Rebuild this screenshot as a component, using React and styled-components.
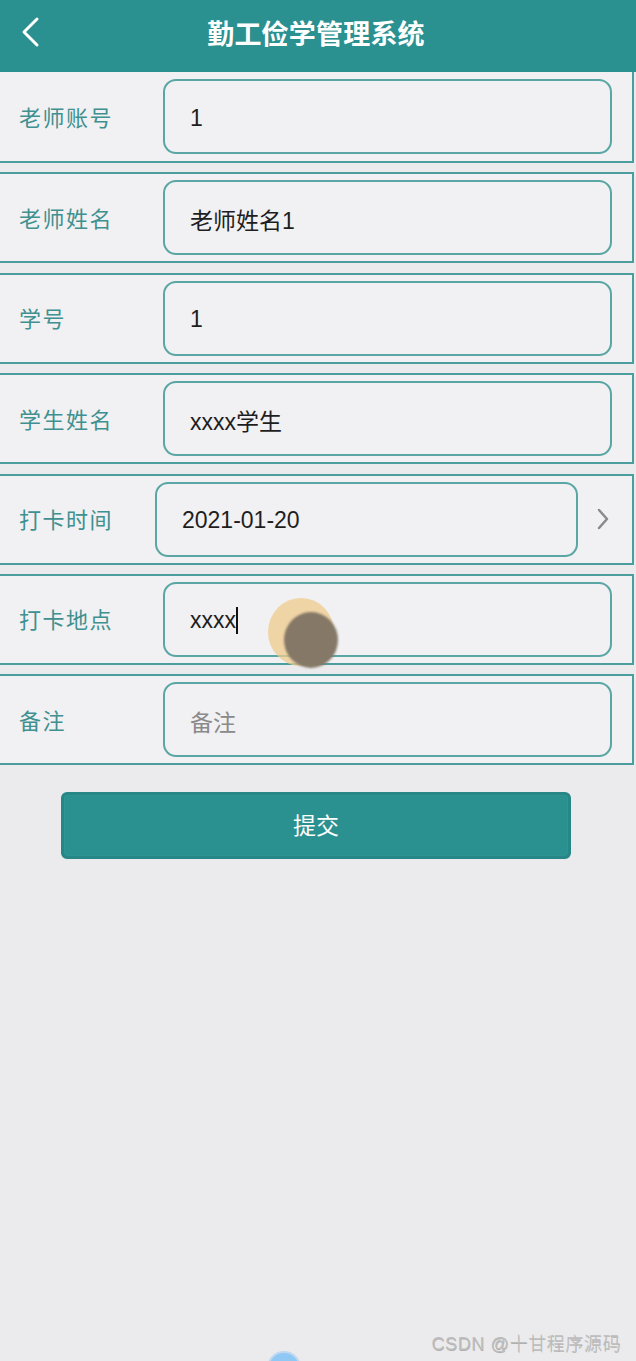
import React from "react";
import styled, { createGlobalStyle } from "styled-components";

const Global = createGlobalStyle`
  html, body { margin: 0; padding: 0; }
  body {
    background: #ebeaec;
    font-family: "Liberation Sans", "Noto Sans CJK SC", sans-serif;
  }
  #root { min-height: 1361px; }
`;

const Page = styled.div`
  position: relative;
  width: 636px;
  height: 1361px;
  overflow: hidden;
  background: #ebeaec;
`;

const Header = styled.header`
  height: 72px;
  background: #2b9090;
  display: flex;
  align-items: center;
  justify-content: center;
  position: relative;
`;

const BackButton = styled.div`
  position: absolute;
  left: 16px;
  top: 15px;
  width: 28px;
  height: 34px;
  display: flex;
  align-items: center;
  justify-content: center;
`;

const Title = styled.h1`
  margin: 0;
  color: #ffffff;
  font-family: "Noto Sans CJK SC", sans-serif;
  font-size: 27px;
  font-weight: 700;
  letter-spacing: 0.2px;
  margin-top: -7px;
  margin-right: 4px;
`;

const Form = styled.div`
  display: flex;
  flex-direction: column;
  gap: 9.4px;
`;

const Row = styled.div`
  box-sizing: border-box;
  height: 91px;
  width: 634px;
  display: flex;
  align-items: center;
  background: #f1f0f2;
  border-top: ${(p) => (p.$first ? "none" : "2px solid #4c9e9e")};
  border-bottom: 2px solid #4c9e9e;
  border-right: 2px solid #4c9e9e;
  padding-left: 19px;
`;

const Label = styled.div`
  width: ${(p) => (p.$narrow ? "136px" : "144px")};
  flex-shrink: 0;
  color: #3f9090;
  font-family: "Noto Sans CJK SC", sans-serif;
  font-size: 22px;
  letter-spacing: 1.5px;
  margin-top: -2px;
`;

const InputBox = styled.div`
  position: relative;
  box-sizing: border-box;
  width: ${(p) => (p.$short ? "423px" : "449px")};
  height: 75px;
  border: 2px solid #5aa6a4;
  border-radius: 13px;
  display: flex;
  align-items: center;
  padding-left: 25px;
  padding-top: 3px;
  font-size: 23px;
  color: ${(p) => (p.$placeholder ? "#8a8a8a" : "#1e1e1e")};
  font-family: "Liberation Sans", "Noto Sans CJK SC", sans-serif;
`;

const Caret = styled.span`
  display: inline-block;
  width: 2px;
  height: 27px;
  background: #111;
`;

const Chevron = styled.div`
  margin-left: 18px;
  display: flex;
  align-items: center;
`;

const ButtonWrap = styled.div`
  display: flex;
  justify-content: center;
  padding-top: 27px;
  padding-right: 4px;
`;

const Submit = styled.button`
  box-sizing: border-box;
  width: 510px;
  height: 67px;
  background: #2b9090;
  border: 3px solid #278686;
  border-radius: 6px;
  box-shadow: inset 0 0 0 1px #2f9593;
  color: #ffffff;
  font-family: "Noto Sans CJK SC", sans-serif;
  font-size: 23px;
  cursor: pointer;
  padding-top: 0;
  padding-bottom: 4px;
`;

const TouchOuter = styled.div`
  position: absolute;
  left: 268px;
  top: 598px;
  width: 66px;
  height: 68px;
  border-radius: 50%;
  background: rgba(238, 203, 140, 0.75);
  filter: blur(0.5px);
`;

const TouchInner = styled.div`
  position: absolute;
  left: 284px;
  top: 612px;
  width: 54px;
  height: 56px;
  border-radius: 50%;
  background: radial-gradient(circle, #857866 0%, #857866 70%, rgba(133,120,102,0.5) 100%);
  filter: blur(1px);
`;

const BottomDot = styled.div`
  position: absolute;
  left: 269px;
  top: 1353px;
  width: 30px;
  height: 30px;
  border-radius: 50%;
  background: #8fc8f5;
  box-shadow: 0 0 0 2px rgba(143, 200, 245, 0.5);
`;

const Watermark = styled.div`
  position: absolute;
  right: 15px;
  top: 1329px;
  color: #bdbdbd;
  font-family: "Liberation Sans", "Noto Sans CJK SC", sans-serif;
  font-size: 18px;
  font-weight: 300;
  letter-spacing: 0.6px;
  text-shadow: 0.5px 0.5px 0.5px rgba(0, 0, 0, 0.25);
`;

const fields = [
  { label: "老师账号", value: "1" },
  { label: "老师姓名", value: "老师姓名1" },
  { label: "学号", value: "1" },
  { label: "学生姓名", value: "xxxx学生" },
  { label: "打卡时间", value: "2021-01-20", date: true },
  { label: "打卡地点", value: "xxxx", caret: true },
  { label: "备注", value: "备注", placeholder: true },
];

export default function App() {
  return (
    <Page>
      <Global />
      <Header>
        <BackButton>
          <svg width="22" height="32" viewBox="0 0 22 32">
            <path d="M18 3 L5 16 L18 29" fill="none" stroke="#ffffff" strokeWidth="3" strokeLinecap="round" strokeLinejoin="round" />
          </svg>
        </BackButton>
        <Title>勤工俭学管理系统</Title>
      </Header>
      <Form>
        {fields.map((f, i) => (
          <Row key={f.label} $first={i === 0}>
            <Label $narrow={f.date}>{f.label}</Label>
            <InputBox $short={f.date} $placeholder={f.placeholder}>
              {f.value}
              {f.caret && <Caret />}
            </InputBox>
            {f.date && (
              <Chevron>
                <svg width="14" height="24" viewBox="0 0 14 24">
                  <path d="M3 3 L11 12 L3 21" fill="none" stroke="#8a8a8a" strokeWidth="2.5" strokeLinecap="round" strokeLinejoin="round" />
                </svg>
              </Chevron>
            )}
          </Row>
        ))}
      </Form>
      <ButtonWrap>
        <Submit>提交</Submit>
      </ButtonWrap>
      <TouchOuter />
      <TouchInner />
      <BottomDot />
      <Watermark>CSDN @十甘程序源码</Watermark>
    </Page>
  );
}
